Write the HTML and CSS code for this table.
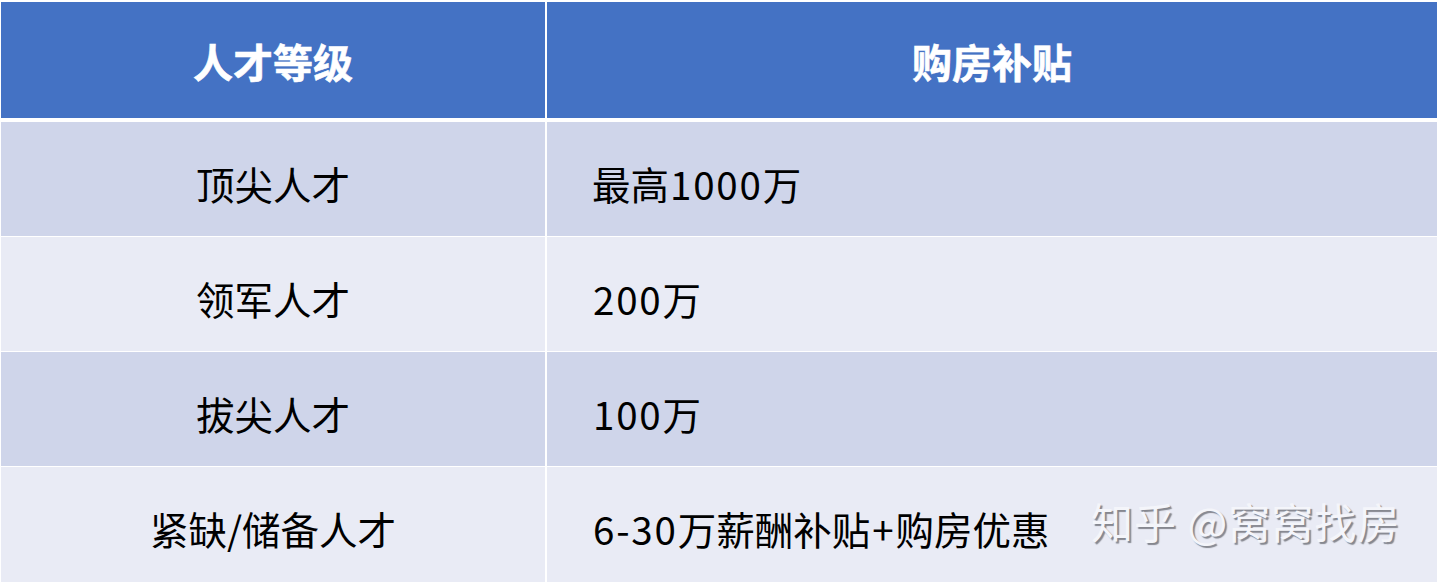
FILE: index.html
```html
<!DOCTYPE html>
<html lang="zh-CN">
<head>
<meta charset="utf-8">
<title>人才购房补贴</title>
<link rel="stylesheet" href="styles.css">
</head>
<body>
<div class="page">
  <div class="table">
    <div class="row head">
      <div class="cell c1">人才等级</div>
      <div class="cell c2">购房补贴</div>
    </div>
    <div class="body">
      <div class="row odd">
        <div class="cell c1">顶尖人才</div>
        <div class="cell c2">最高<span class="lat">1000</span>万</div>
      </div>
      <div class="row even">
        <div class="cell c1">领军人才</div>
        <div class="cell c2"><span class="lat">200</span>万</div>
      </div>
      <div class="row odd">
        <div class="cell c1">拔尖人才</div>
        <div class="cell c2"><span class="lat">100</span>万</div>
      </div>
      <div class="row even last">
        <div class="cell c1">紧缺/储备人才</div>
        <div class="cell c2"><span class="lat">6-30</span>万薪酬补贴<span class="lat plus">+</span>购房优惠</div>
      </div>
    </div>
  </div>
  <div class="watermark">知乎 @窝窝找房</div>
</div>
</body>
</html>
```
FILE: styles.css
```css
html, body {
  margin: 0;
  padding: 0;
  background: #ffffff;
}
body {
  font-family: "Noto Sans CJK SC", "Noto Sans", sans-serif;
  color: #000;
}
.page {
  position: relative;
  width: 1440px;
  height: 585px;
  box-sizing: border-box;
  padding: 2px 3px 3px 1px;
  overflow: hidden;
}
.table {
  display: flex;
  flex-direction: column;
  gap: 4px;
}
.body {
  display: flex;
  flex-direction: column;
  gap: 1px;
}
.row {
  display: grid;
  grid-template-columns: 544px 1fr;
  column-gap: 2px;
  height: 114px;
}
.row.head {
  height: 116px;
}
.row.last {
  height: 115px;
}
.cell {
  display: flex;
  align-items: center;
  font-size: 38.5px;
  line-height: 1;
  padding-top: 8px;
  box-sizing: border-box;
  white-space: pre;
}
.lat {
  letter-spacing: 1.8px;
  padding-left: 1px;
}
.lat.plus {
  padding: 0 2px;
  letter-spacing: 0;
}
.c1 {
  justify-content: center;
}
.c2 {
  padding-left: 45px;
}
.head .cell {
  background: #4472c4;
  color: #ffffff;
  font-weight: 700;
  font-size: 40px;
  justify-content: center;
  padding-left: 0;
  padding-top: 1px;
  -webkit-text-stroke: 0.6px #ffffff;
}
.odd .cell {
  background: #cfd5ea;
}
.even .cell {
  background: #e9ebf5;
}
.watermark {
  position: absolute;
  left: 1091px;
  top: 500px;
  font-size: 42px;
  line-height: 1;
  color: #f4f5fa;
  letter-spacing: 1px;
  text-shadow: 2px 2px 1px #85878f;
}
```
